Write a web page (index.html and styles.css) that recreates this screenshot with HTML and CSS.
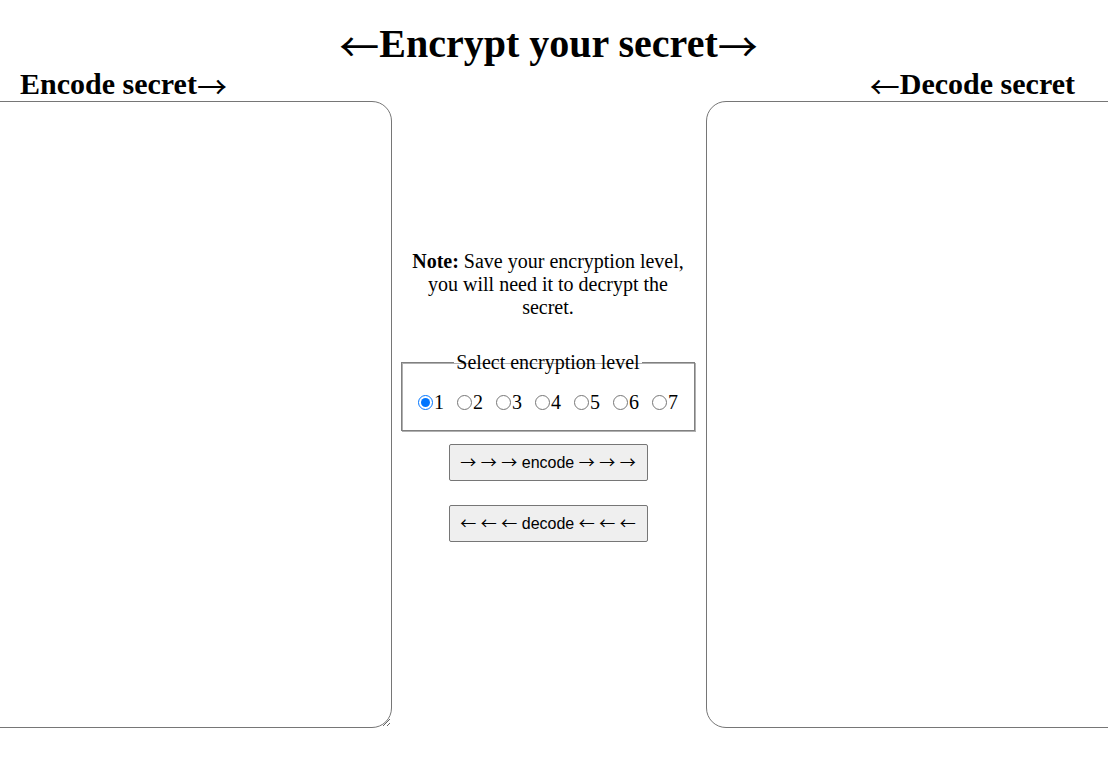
FILE: index.html
```html
<!DOCTYPE html>
<html lang="en">
<head>
<meta charset="utf-8">
<title>Encrypt your secret</title>
<link rel="stylesheet" href="styles.css">
</head>
<body>
<main class="page">
  <h1 class="title"><span class="arrow">←</span>Encrypt your secret<span class="arrow">→</span></h1>
  <div class="workspace">
    <section class="pane pane-left">
      <h2 class="pane-title">Encode secret<span class="arrow">→</span></h2>
      <textarea class="secret secret-left"></textarea>
    </section>
    <section class="controls">
      <p class="note"><b>Note:</b> Save your encryption level, you will need it to decrypt the secret.</p>
      <fieldset class="levels">
        <legend class="levels-title">Select encryption level</legend>
        <div class="level-list">
          <label class="level"><input type="radio" name="level" value="1" checked><span>1</span></label>
          <label class="level"><input type="radio" name="level" value="2"><span>2</span></label>
          <label class="level"><input type="radio" name="level" value="3"><span>3</span></label>
          <label class="level"><input type="radio" name="level" value="4"><span>4</span></label>
          <label class="level"><input type="radio" name="level" value="5"><span>5</span></label>
          <label class="level"><input type="radio" name="level" value="6"><span>6</span></label>
          <label class="level"><input type="radio" name="level" value="7"><span>7</span></label>
        </div>
      </fieldset>
      <button class="action action-encode" type="button"><span class="arrow">→</span> <span class="arrow">→</span> <span class="arrow">→</span> encode <span class="arrow">→</span> <span class="arrow">→</span> <span class="arrow">→</span></button>
      <button class="action action-decode" type="button"><span class="arrow">←</span> <span class="arrow">←</span> <span class="arrow">←</span> decode <span class="arrow">←</span> <span class="arrow">←</span> <span class="arrow">←</span></button>
    </section>
    <section class="pane pane-right">
      <h2 class="pane-title"><span class="arrow">←</span>Decode secret</h2>
      <textarea class="secret secret-right"></textarea>
    </section>
  </div>
</main>
</body>
</html>
```

FILE: styles.css
```css
html, body {
  margin: 0;
  padding: 0;
  background: #ffffff;
  overflow: hidden;
}

body {
  font-family: "Liberation Serif", "Times New Roman", serif;
  color: #000;
  width: 1108px;
  height: 770px;
}

.page {
  display: flex;
  flex-direction: column;
  padding-top: 21px;
}

.arrow {
  font-family: "Noto Sans CJK JP", "DejaVu Sans", sans-serif;
  font-weight: normal;
  line-height: 0;
}

.title .arrow,
.pane-title .arrow {
  vertical-align: -0.12em;
}

.title {
  margin: 0;
  padding-right: 11px;
  font-size: 40px;
  font-weight: bold;
  text-align: center;
  line-height: 46px;
}

.workspace {
  display: grid;
  grid-template-columns: 391px 315px 402px;
}

.pane {
  display: flex;
  flex-direction: column;
  min-width: 0;
}

.pane-title {
  margin: 0 0 1px;
  font-size: 30px;
  font-weight: bold;
  line-height: 33px;
}

.pane-left .pane-title {
  padding-left: 20px;
}

.pane-right .pane-title {
  text-align: right;
  padding-right: 33px;
}

.secret {
  display: block;
  box-sizing: border-box;
  height: 627px;
  border: 1px solid #767676;
  border-radius: 20px;
  background: #fff;
  font-family: "Liberation Mono", monospace;
  font-size: 13px;
  padding: 2px;
  outline: none;
}

.secret-left {
  width: 432px;
  margin-left: -40px;
}

.secret-right {
  width: 440px;
}

.controls {
  display: flex;
  flex-direction: column;
  align-items: center;
  justify-content: center;
  padding: 0 11px 3px 10px;
}

.note {
  margin: 0 0 32px;
  font-size: 20px;
  line-height: 23px;
  text-align: center;
  padding: 0 8px;
}

.levels {
  box-sizing: border-box;
  width: 294px;
  margin: 0 0 13px;
  padding: 17px 0 16px;
  border: 1px solid #808080;
  box-shadow: inset 1px 1px 0 #b0b0b0, 1px 1px 0 #b0b0b0;
}

.levels-title {
  font-size: 20px;
  line-height: 23px;
  padding: 0 2px;
  margin: 0 auto;
}

.level-list {
  display: flex;
  justify-content: center;
  gap: 13px;
}

.level {
  display: inline-flex;
  align-items: center;
  font-size: 20px;
  line-height: 23px;
}

.level input {
  margin: 0 1px 0 0;
  width: 15px;
  height: 15px;
}

.action {
  box-sizing: border-box;
  width: 199px;
  height: 37px;
  margin: 0 0 24px;
  padding: 0 4px;
  font-family: "Liberation Sans", Arial, sans-serif;
  font-size: 16px;
  color: #000;
  background: #efefef;
  border: 1px solid #767676;
  border-radius: 2px;
}

.action-decode {
  margin-bottom: 0;
}
```
